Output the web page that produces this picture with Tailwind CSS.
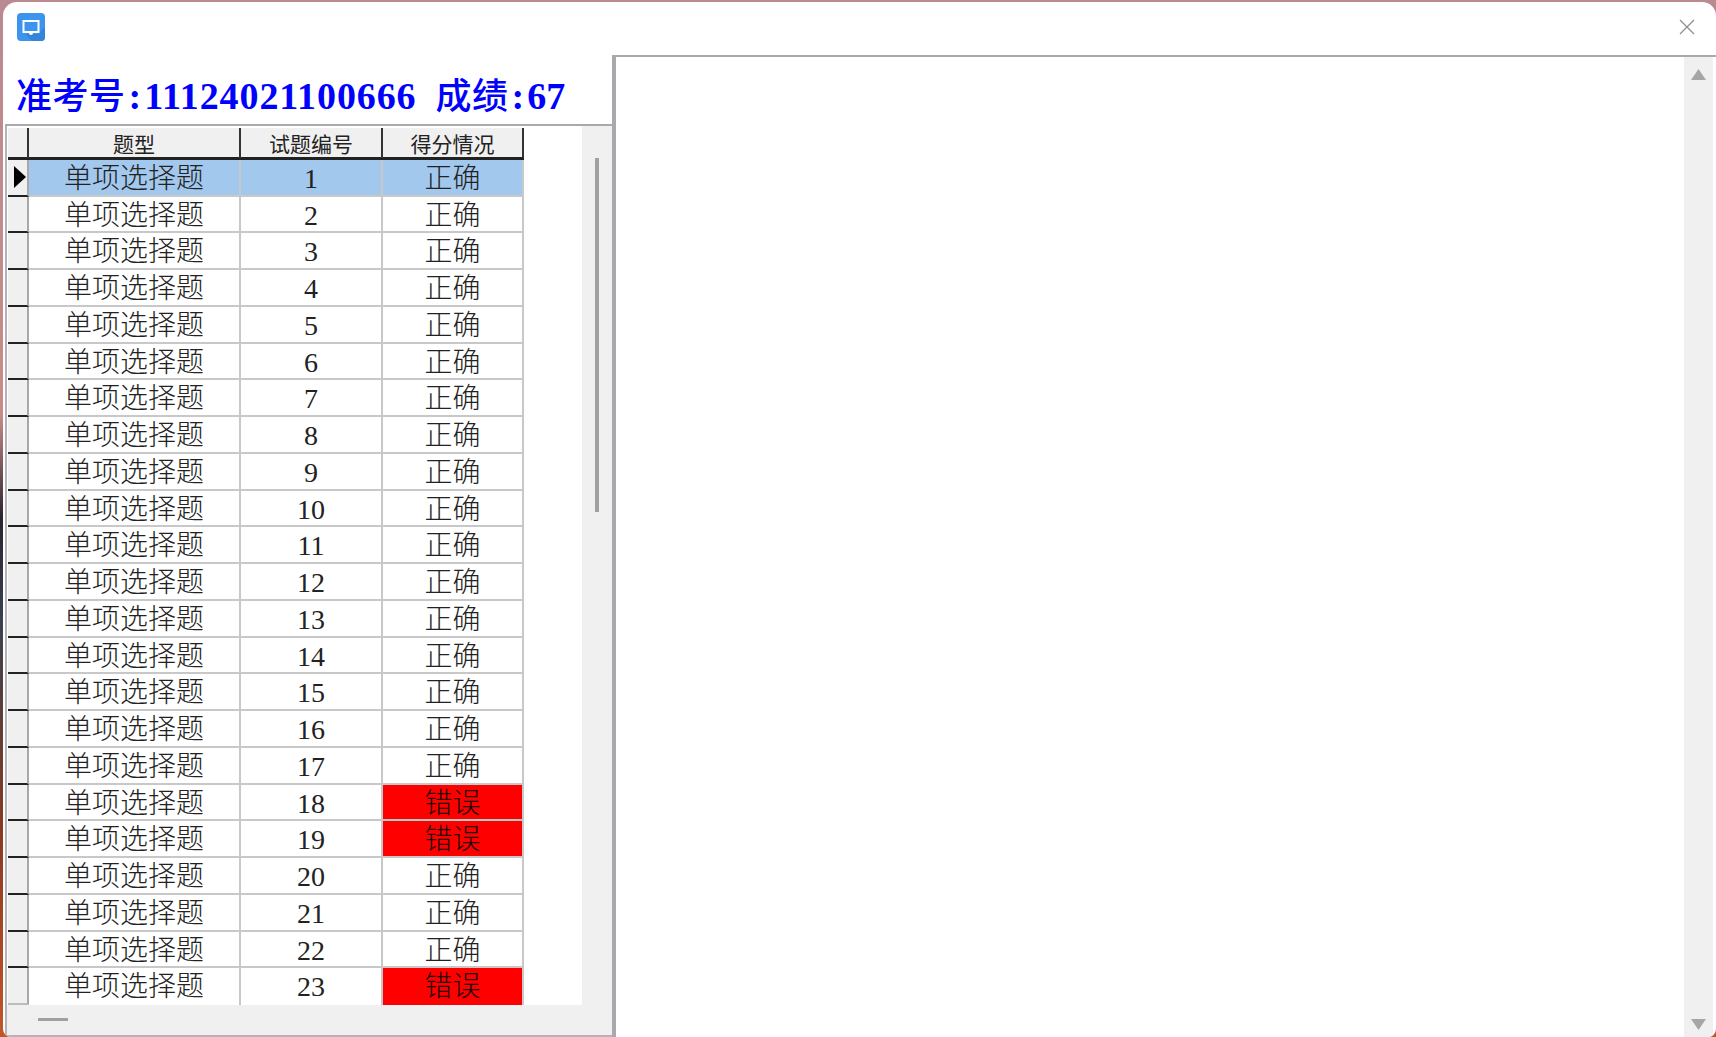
<!DOCTYPE html>
<html lang="zh-CN">
<head>
    <meta charset="UTF-8">
    <title>成绩查询</title>
    <script src="https://cdn.jsdelivr.net/npm/@tailwindcss/browser@4"></script>
</head>
<body class="w-[1716px] h-[1037px] overflow-hidden bg-[linear-gradient(180deg,#b98a90_0%,#c98b88_40%,#2a2430_50%,#39424f_60%,#8a3a20_80%,#c4552a_100%)] font-['Liberation_Serif','Noto_Sans_CJK_SC',serif]">
    <div class="ml-[3px] mt-[2px] w-[1713px] h-[1035px] bg-white rounded-t-[14px] rounded-b-[8px] overflow-hidden flex flex-col">
        <!-- Title bar -->
        <div class="h-[53px] shrink-0 flex items-center justify-between pl-[14px] pr-[21px] pb-[4px]">
            <svg class="w-[28px] h-[28px]" viewBox="0 0 28 28">
                <rect width="28" height="28" rx="4" fill="#3d94ee"/>
                <path d="M8 21 L21 21 L28 14 L28 24 Q28 28 24 28 L15 28 Z" fill="#3484d8"/>
                <path d="M6.5 8 H21.5 V19 H6.5 Z" fill="none" stroke="#fff" stroke-width="2"/>
                <circle cx="14" cy="20" r="2" fill="#fff"/>
            </svg>
            <svg class="w-[16px] h-[16px]" viewBox="0 0 16 16">
                <path d="M1 1 L15 15 M15 1 L1 15" stroke="#8c8c8c" stroke-width="1.2"/>
            </svg>
        </div>

        <div class="flex-1 flex min-h-0">
            <!-- Left pane -->
            <div class="w-[609px] shrink-0 flex flex-col">
                <div class="h-[71px] shrink-0 border-b-2 border-[#a9a9ad] pl-[11px] pt-[15px] ml-[2px] text-[38px] leading-[52px] font-bold text-[#0000ff] whitespace-pre"><span class="text-[36px] font-medium tracking-[0.5px]">准考号</span><span class="px-[3px]">:</span><span class="tracking-[0.9px]">11124021100666</span><span class="text-[36px] font-medium tracking-[0.5px] pl-[19px]">成绩</span><span class="px-[3px]">:</span>67</div>
                <div class="flex-1 flex flex-col min-h-0 ml-[2px] border-l-2 border-b-2 border-[#b4b4b8]">
                    <div class="flex-1 flex min-h-0">
                        <div class="w-[575px] shrink-0 pt-[2px] pl-[1px] bg-white">
                            <!-- Header -->
                            <div class="grid grid-cols-[21px_212px_142px_141px] w-[516px] h-[32px] bg-[#f0f0f0] text-[21px] text-[#222] text-center font-['Noto_Sans_CJK_SC',sans-serif] leading-[30px] border-b-[3px] border-[#222]">
                                <div class="border-r-2 border-[#333]"></div>
                                <div class="border-r-2 border-[#333]">题型</div>
                                <div class="border-r-2 border-[#333]">试题编号</div>
                                <div class="border-r-2 border-[#333]">得分情况</div>
                            </div>
                            <!-- Rows -->
                            <div class="grid grid-rows-[repeat(23,minmax(0,1fr))] w-[516px] h-[845px] text-[28px] font-light text-[#222] text-center leading-[38px]">
                                <div class="grid grid-cols-[21px_212px_142px_141px] grid-rows-[minmax(0,1fr)]"><div class="flex items-center pl-[6px] bg-[#f0f0f0] border-r-2 border-b-2 border-r-[#a8a8a8] border-b-[#222]"><svg class="w-[12px] h-[22px]" viewBox="0 0 12 22"><path d="M0 0 L12 11 L0 22 Z" fill="#000"/></svg></div><div class="bg-[#a3c8ee] border-r-2 border-b-2 border-[#c8c8c8]">单项选择题</div><div class="bg-[#a3c8ee] border-r-2 border-b-2 border-[#c8c8c8]">1</div><div class="bg-[#a3c8ee] border-r-2 border-b-2 border-[#c8c8c8]">正确</div></div>
                                <div class="grid grid-cols-[21px_212px_142px_141px] grid-rows-[minmax(0,1fr)]"><div class="bg-[#f0f0f0] border-r-2 border-b-2 border-r-[#a8a8a8] border-b-[#222]"></div><div class="border-r-2 border-b-2 border-[#c8c8c8]">单项选择题</div><div class="border-r-2 border-b-2 border-[#c8c8c8]">2</div><div class="border-r-2 border-b-2 border-[#c8c8c8]">正确</div></div>
                                <div class="grid grid-cols-[21px_212px_142px_141px] grid-rows-[minmax(0,1fr)]"><div class="bg-[#f0f0f0] border-r-2 border-b-2 border-r-[#a8a8a8] border-b-[#222]"></div><div class="border-r-2 border-b-2 border-[#c8c8c8]">单项选择题</div><div class="border-r-2 border-b-2 border-[#c8c8c8]">3</div><div class="border-r-2 border-b-2 border-[#c8c8c8]">正确</div></div>
                                <div class="grid grid-cols-[21px_212px_142px_141px] grid-rows-[minmax(0,1fr)]"><div class="bg-[#f0f0f0] border-r-2 border-b-2 border-r-[#a8a8a8] border-b-[#222]"></div><div class="border-r-2 border-b-2 border-[#c8c8c8]">单项选择题</div><div class="border-r-2 border-b-2 border-[#c8c8c8]">4</div><div class="border-r-2 border-b-2 border-[#c8c8c8]">正确</div></div>
                                <div class="grid grid-cols-[21px_212px_142px_141px] grid-rows-[minmax(0,1fr)]"><div class="bg-[#f0f0f0] border-r-2 border-b-2 border-r-[#a8a8a8] border-b-[#222]"></div><div class="border-r-2 border-b-2 border-[#c8c8c8]">单项选择题</div><div class="border-r-2 border-b-2 border-[#c8c8c8]">5</div><div class="border-r-2 border-b-2 border-[#c8c8c8]">正确</div></div>
                                <div class="grid grid-cols-[21px_212px_142px_141px] grid-rows-[minmax(0,1fr)]"><div class="bg-[#f0f0f0] border-r-2 border-b-2 border-r-[#a8a8a8] border-b-[#222]"></div><div class="border-r-2 border-b-2 border-[#c8c8c8]">单项选择题</div><div class="border-r-2 border-b-2 border-[#c8c8c8]">6</div><div class="border-r-2 border-b-2 border-[#c8c8c8]">正确</div></div>
                                <div class="grid grid-cols-[21px_212px_142px_141px] grid-rows-[minmax(0,1fr)]"><div class="bg-[#f0f0f0] border-r-2 border-b-2 border-r-[#a8a8a8] border-b-[#222]"></div><div class="border-r-2 border-b-2 border-[#c8c8c8]">单项选择题</div><div class="border-r-2 border-b-2 border-[#c8c8c8]">7</div><div class="border-r-2 border-b-2 border-[#c8c8c8]">正确</div></div>
                                <div class="grid grid-cols-[21px_212px_142px_141px] grid-rows-[minmax(0,1fr)]"><div class="bg-[#f0f0f0] border-r-2 border-b-2 border-r-[#a8a8a8] border-b-[#222]"></div><div class="border-r-2 border-b-2 border-[#c8c8c8]">单项选择题</div><div class="border-r-2 border-b-2 border-[#c8c8c8]">8</div><div class="border-r-2 border-b-2 border-[#c8c8c8]">正确</div></div>
                                <div class="grid grid-cols-[21px_212px_142px_141px] grid-rows-[minmax(0,1fr)]"><div class="bg-[#f0f0f0] border-r-2 border-b-2 border-r-[#a8a8a8] border-b-[#222]"></div><div class="border-r-2 border-b-2 border-[#c8c8c8]">单项选择题</div><div class="border-r-2 border-b-2 border-[#c8c8c8]">9</div><div class="border-r-2 border-b-2 border-[#c8c8c8]">正确</div></div>
                                <div class="grid grid-cols-[21px_212px_142px_141px] grid-rows-[minmax(0,1fr)]"><div class="bg-[#f0f0f0] border-r-2 border-b-2 border-r-[#a8a8a8] border-b-[#222]"></div><div class="border-r-2 border-b-2 border-[#c8c8c8]">单项选择题</div><div class="border-r-2 border-b-2 border-[#c8c8c8]">10</div><div class="border-r-2 border-b-2 border-[#c8c8c8]">正确</div></div>
                                <div class="grid grid-cols-[21px_212px_142px_141px] grid-rows-[minmax(0,1fr)]"><div class="bg-[#f0f0f0] border-r-2 border-b-2 border-r-[#a8a8a8] border-b-[#222]"></div><div class="border-r-2 border-b-2 border-[#c8c8c8]">单项选择题</div><div class="border-r-2 border-b-2 border-[#c8c8c8]">11</div><div class="border-r-2 border-b-2 border-[#c8c8c8]">正确</div></div>
                                <div class="grid grid-cols-[21px_212px_142px_141px] grid-rows-[minmax(0,1fr)]"><div class="bg-[#f0f0f0] border-r-2 border-b-2 border-r-[#a8a8a8] border-b-[#222]"></div><div class="border-r-2 border-b-2 border-[#c8c8c8]">单项选择题</div><div class="border-r-2 border-b-2 border-[#c8c8c8]">12</div><div class="border-r-2 border-b-2 border-[#c8c8c8]">正确</div></div>
                                <div class="grid grid-cols-[21px_212px_142px_141px] grid-rows-[minmax(0,1fr)]"><div class="bg-[#f0f0f0] border-r-2 border-b-2 border-r-[#a8a8a8] border-b-[#222]"></div><div class="border-r-2 border-b-2 border-[#c8c8c8]">单项选择题</div><div class="border-r-2 border-b-2 border-[#c8c8c8]">13</div><div class="border-r-2 border-b-2 border-[#c8c8c8]">正确</div></div>
                                <div class="grid grid-cols-[21px_212px_142px_141px] grid-rows-[minmax(0,1fr)]"><div class="bg-[#f0f0f0] border-r-2 border-b-2 border-r-[#a8a8a8] border-b-[#222]"></div><div class="border-r-2 border-b-2 border-[#c8c8c8]">单项选择题</div><div class="border-r-2 border-b-2 border-[#c8c8c8]">14</div><div class="border-r-2 border-b-2 border-[#c8c8c8]">正确</div></div>
                                <div class="grid grid-cols-[21px_212px_142px_141px] grid-rows-[minmax(0,1fr)]"><div class="bg-[#f0f0f0] border-r-2 border-b-2 border-r-[#a8a8a8] border-b-[#222]"></div><div class="border-r-2 border-b-2 border-[#c8c8c8]">单项选择题</div><div class="border-r-2 border-b-2 border-[#c8c8c8]">15</div><div class="border-r-2 border-b-2 border-[#c8c8c8]">正确</div></div>
                                <div class="grid grid-cols-[21px_212px_142px_141px] grid-rows-[minmax(0,1fr)]"><div class="bg-[#f0f0f0] border-r-2 border-b-2 border-r-[#a8a8a8] border-b-[#222]"></div><div class="border-r-2 border-b-2 border-[#c8c8c8]">单项选择题</div><div class="border-r-2 border-b-2 border-[#c8c8c8]">16</div><div class="border-r-2 border-b-2 border-[#c8c8c8]">正确</div></div>
                                <div class="grid grid-cols-[21px_212px_142px_141px] grid-rows-[minmax(0,1fr)]"><div class="bg-[#f0f0f0] border-r-2 border-b-2 border-r-[#a8a8a8] border-b-[#222]"></div><div class="border-r-2 border-b-2 border-[#c8c8c8]">单项选择题</div><div class="border-r-2 border-b-2 border-[#c8c8c8]">17</div><div class="border-r-2 border-b-2 border-[#c8c8c8]">正确</div></div>
                                <div class="grid grid-cols-[21px_212px_142px_141px] grid-rows-[minmax(0,1fr)]"><div class="bg-[#f0f0f0] border-r-2 border-b-2 border-r-[#a8a8a8] border-b-[#222]"></div><div class="border-r-2 border-b-2 border-[#c8c8c8]">单项选择题</div><div class="border-r-2 border-b-2 border-[#c8c8c8]">18</div><div class="bg-[#ff0000] text-[#200000] border-r-2 border-b-2 border-[#c8c8c8]">错误</div></div>
                                <div class="grid grid-cols-[21px_212px_142px_141px] grid-rows-[minmax(0,1fr)]"><div class="bg-[#f0f0f0] border-r-2 border-b-2 border-r-[#a8a8a8] border-b-[#222]"></div><div class="border-r-2 border-b-2 border-[#c8c8c8]">单项选择题</div><div class="border-r-2 border-b-2 border-[#c8c8c8]">19</div><div class="bg-[#ff0000] text-[#200000] border-r-2 border-b-2 border-[#c8c8c8]">错误</div></div>
                                <div class="grid grid-cols-[21px_212px_142px_141px] grid-rows-[minmax(0,1fr)]"><div class="bg-[#f0f0f0] border-r-2 border-b-2 border-r-[#a8a8a8] border-b-[#222]"></div><div class="border-r-2 border-b-2 border-[#c8c8c8]">单项选择题</div><div class="border-r-2 border-b-2 border-[#c8c8c8]">20</div><div class="border-r-2 border-b-2 border-[#c8c8c8]">正确</div></div>
                                <div class="grid grid-cols-[21px_212px_142px_141px] grid-rows-[minmax(0,1fr)]"><div class="bg-[#f0f0f0] border-r-2 border-b-2 border-r-[#a8a8a8] border-b-[#222]"></div><div class="border-r-2 border-b-2 border-[#c8c8c8]">单项选择题</div><div class="border-r-2 border-b-2 border-[#c8c8c8]">21</div><div class="border-r-2 border-b-2 border-[#c8c8c8]">正确</div></div>
                                <div class="grid grid-cols-[21px_212px_142px_141px] grid-rows-[minmax(0,1fr)]"><div class="bg-[#f0f0f0] border-r-2 border-b-2 border-r-[#a8a8a8] border-b-[#222]"></div><div class="border-r-2 border-b-2 border-[#c8c8c8]">单项选择题</div><div class="border-r-2 border-b-2 border-[#c8c8c8]">22</div><div class="border-r-2 border-b-2 border-[#c8c8c8]">正确</div></div>
                                <div class="grid grid-cols-[21px_212px_142px_141px] grid-rows-[minmax(0,1fr)]"><div class="bg-[#f0f0f0] border-r-2 border-b-2 border-r-[#a8a8a8] border-b-[#bdbdbd]"></div><div class="border-r-2 border-[#c8c8c8]">单项选择题</div><div class="border-r-2 border-[#c8c8c8]">23</div><div class="bg-[#ff0000] text-[#200000] border-r-2 border-[#c8c8c8]">错误</div></div>
                            </div>
                        </div>
                        <!-- Vertical scrollbar -->
                        <div class="flex-1 bg-[#f0f0f0] pt-[32px] pl-[13px]">
                            <div class="w-[4px] h-[354px] bg-[#a0a0a0]"></div>
                        </div>
                    </div>
                    <!-- Horizontal scrollbar -->
                    <div class="h-[30px] shrink-0 bg-[#f0f0f0] pl-[31px] pt-[13px]">
                        <div class="w-[30px] h-[3px] bg-[#a0a0a0]"></div>
                    </div>
                </div>
            </div>

            <!-- Right pane -->
            <div class="flex-1 flex border-l-4 border-t-2 border-[#a9a9ad] pr-[3px]">
                <div class="flex-1"></div>
                <div class="w-[29px] bg-[#f0f0f0] flex flex-col items-center justify-between pt-[12px] pb-[7px]">
                    <svg class="w-[15px] h-[11px]" viewBox="0 0 15 11"><path d="M7.5 0 L15 11 L0 11 Z" fill="#a6a6a6"/></svg>
                    <svg class="w-[15px] h-[11px]" viewBox="0 0 15 11"><path d="M0 0 L15 0 L7.5 11 Z" fill="#a6a6a6"/></svg>
                </div>
            </div>
        </div>
    </div>
</body>
</html>
